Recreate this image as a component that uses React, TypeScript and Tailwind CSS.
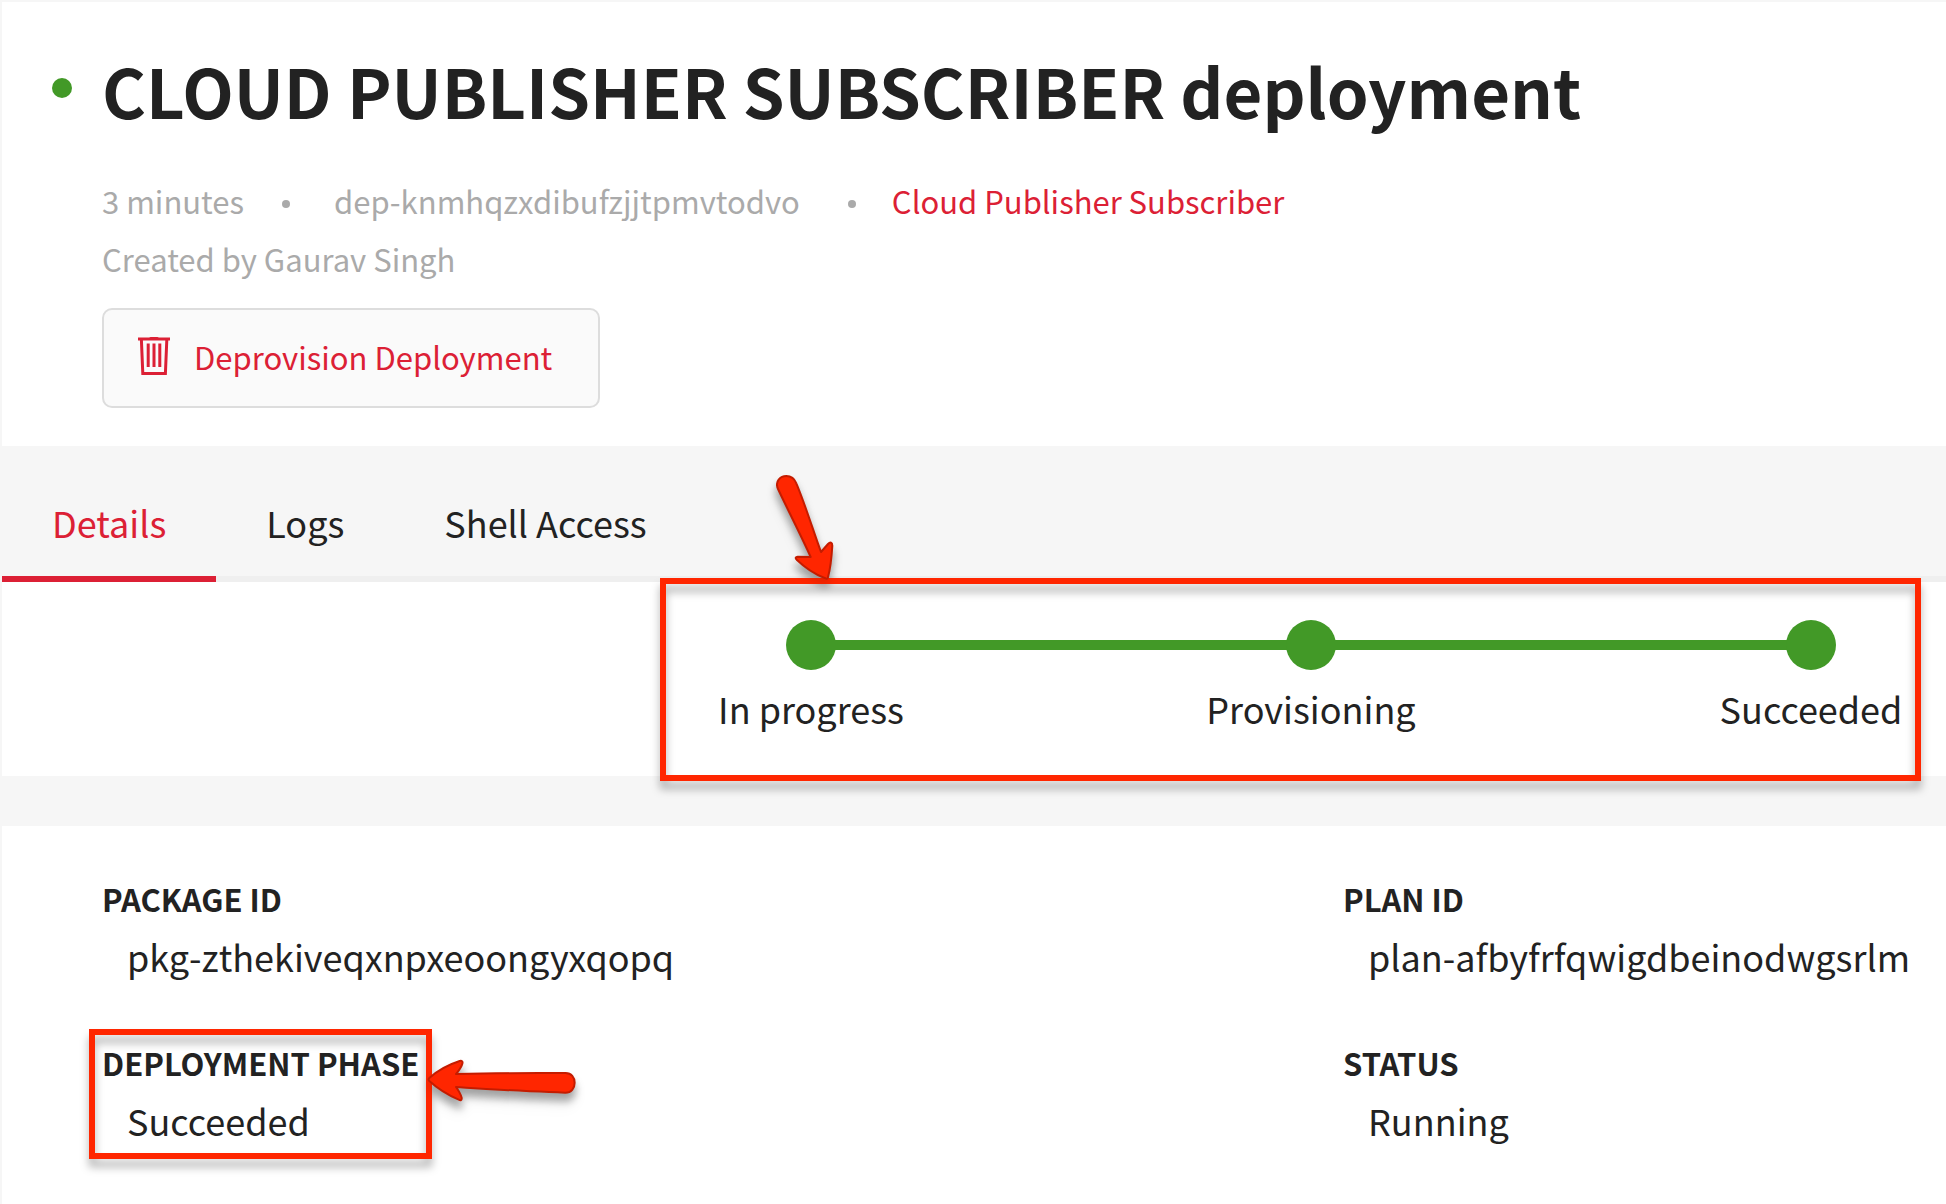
import React from "react";

const steps = ["In progress", "Provisioning", "Succeeded"];
const tabs = ["Details", "Logs", "Shell Access"];

type Field = { label: string; value: string; marked?: boolean };

const fields: Field[] = [
  { label: "PACKAGE ID", value: "pkg-zthekiveqxnpxeoongyxqopq" },
  { label: "PLAN ID", value: "plan-afbyfrfqwigdbeinodwgsrlm" },
  { label: "DEPLOYMENT PHASE", value: "Succeeded", marked: true },
  { label: "STATUS", value: "Running" },
];

function TrashIcon() {
  return (
    <svg viewBox="0 0 32 40" className="h-10 w-8" fill="none" stroke="currentColor" aria-hidden="true">
      <path d="M0 2H32" strokeWidth="3" />
      <path d="M11.5 2Q13 0.6 14.5 0.6H17.5Q19 0.6 20.5 2" strokeWidth="2" />
      <path d="M3.4 3L4.8 36.6H27.4L28.8 3" strokeWidth="3" />
      <path d="M10.2 6.5V30M16 6.5V30M21.8 6.5V30" strokeWidth="3" />
    </svg>
  );
}

function DownArrow() {
  return (
    <svg
      viewBox="0 0 270 420"
      className="absolute -top-[124px] left-[94px] h-[140px] w-[90px] overflow-visible drop-shadow-[0_6px_4px_rgba(0,0,0,0.1)]"
      fill="#ff2600"
      stroke="#c41c00"
      strokeWidth="6"
      strokeLinejoin="round"
      aria-hidden="true"
    >
      <path d="M54 87C44 64 61 48 79 48C94 48 104 57 109 70C137 137 158 208 183 276L204 252C211 245 217 247 217 257C215 290 210 330 204 352C203 357 200 357 194 354C166 343 132 320 110 299C105 294 107 291 113 290L152 291C120 220 86 155 54 87Z" />
    </svg>
  );
}

function LeftArrow() {
  return (
    <svg
      viewBox="0 0 570 240"
      className="absolute top-[5px] left-[315px] h-20 w-[190px] overflow-visible drop-shadow-[0_6px_4px_rgba(0,0,0,0.1)]"
      fill="#ff2600"
      stroke="#c41c00"
      strokeWidth="6"
      strokeLinejoin="round"
      aria-hidden="true"
    >
      <path d="M58 114C80 94 115 74 149 63C156 61 159 65 157 71C154 83 146 92 138 102C250 99 355 98 467 99C484 99 494 112 494 128C494 145 484 158 466 158C355 155 250 148 138 141C146 152 152 162 155 173C156 181 152 182 146 179C114 165 82 145 58 123C55 120 55 117 58 114Z" />
    </svg>
  );
}

const frame =
  "pointer-events-none absolute border-[6px] border-[#ff2600] drop-shadow-[0_8px_4px_rgba(0,0,0,0.3)]";

export default function App() {
  return (
    <div className="min-h-screen overflow-x-hidden border-t-2 border-l-2 border-[#f6f6f6] bg-white font-['Noto_Sans_CJK_SC','Noto_Sans',sans-serif] text-[36px] leading-[58px] text-[#222222]">
      <header className="px-[50px] pt-[47px] pb-[38px]">
        <div className="flex items-start gap-[30px]">
          <span className="mt-[29px] size-5 shrink-0 rounded-full bg-[#429927]" role="img" aria-label="Running" />
          <h1 className="text-[67px] leading-[82px] font-bold">CLOUD PUBLISHER SUBSCRIBER deployment</h1>
        </div>
        <div className="mt-[41px] pl-[50px] text-[31px] text-[#aaaaaa]">
          <div className="flex items-center">
            <span>3 minutes</span>
            <span className="mt-1.5 mr-11 ml-[38px] size-2 rounded-full bg-current" />
            <span>dep-knmhqzxdibufzjjtpmvtodvo</span>
            <span className="mt-1.5 mr-9 ml-12 size-2 rounded-full bg-current" />
            <a href="#package" className="text-[#dc2035]">Cloud Publisher Subscriber</a>
          </div>
          <p>Created by Gaurav Singh</p>
          <button
            type="button"
            className="mt-5 flex h-[100px] items-center gap-6 rounded-[10px] border-2 border-[#dddddd] bg-[#fafafa] pr-[46px] pb-0.5 pl-[34px] text-[#dc2035]"
          >
            <TrashIcon />
            Deprovision Deployment
          </button>
        </div>
      </header>

      <nav className="bg-[#f6f6f6] pt-[22px]">
        <div className="flex shadow-[inset_0_-6px_0_#efefef]" role="tablist">
          {tabs.map((t, i) => (
            <button
              key={t}
              type="button"
              role="tab"
              aria-selected={i === 0}
              className={
                i === 0
                  ? "border-b-[6px] border-[#dc2035] px-[50px] py-[25px] text-[#dc2035]"
                  : "border-b-[6px] border-transparent px-[50px] py-[25px]"
              }
            >
              {t}
            </button>
          ))}
        </div>
      </nav>

      <section className="relative">
        <div className="overflow-hidden pt-[38px] pb-[39px]">
          <ol className="ml-[559px] flex">
            {steps.map((s, i) => (
              <li key={s} className="w-[500px] shrink-0 text-center">
                <div className="flex items-center">
                  <span className={i === 0 ? "h-[10px] flex-1" : "h-[10px] flex-1 bg-[#429927]"} />
                  <span className="-mx-px size-[50px] rounded-full bg-[#429927]" />
                  <span className={i === steps.length - 1 ? "h-[10px] flex-1" : "h-[10px] flex-1 bg-[#429927]"} />
                </div>
                <p className="mt-[9px]">{s}</p>
              </li>
            ))}
          </ol>
        </div>
        <div className={`${frame} -top-1 right-[25px] -bottom-[5px] left-[658px]`}>
          <DownArrow />
        </div>
      </section>

      <div className="h-[50px] bg-[#f6f6f6]" />

      <dl className="grid grid-cols-[1241fr_603fr] gap-y-12 pt-[43px] pb-[54px] pl-[100px]">
        {fields.map((f) => (
          <div key={f.label} className="relative w-fit">
            <dt className="pt-0.5 text-[31px] leading-[56px] font-bold">{f.label}</dt>
            <dd className="pl-[25px]">{f.value}</dd>
            {f.marked && (
              <div className={`${frame} -top-1 -right-[13px] -bottom-[10px] -left-[13px]`}>
                <LeftArrow />
              </div>
            )}
          </div>
        ))}
      </dl>
    </div>
  );
}
